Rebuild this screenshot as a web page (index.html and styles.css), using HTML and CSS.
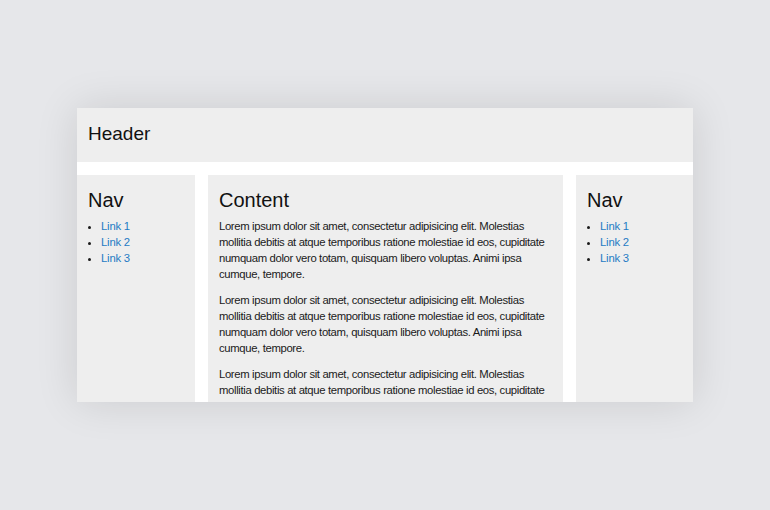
FILE: index.html
```html
<!DOCTYPE html>
<html>
<head>
<meta charset="utf-8">
<link rel="stylesheet" href="styles.css">
</head>
<body>
<div class="page">
  <header class="header">Header</header>
  <nav class="panel">
    <h2 class="title">Nav</h2>
    <ul class="links">
      <li><a href="#">Link 1</a></li>
      <li><a href="#">Link 2</a></li>
      <li><a href="#">Link 3</a></li>
    </ul>
  </nav>
  <main class="panel">
    <h2 class="title">Content</h2>
    <p class="text">Lorem ipsum dolor sit amet, consectetur adipisicing elit. Molestias mollitia debitis at atque temporibus ratione molestiae id eos, cupiditate numquam dolor vero totam, quisquam libero voluptas. Animi ipsa cumque, tempore.</p>
    <p class="text">Lorem ipsum dolor sit amet, consectetur adipisicing elit. Molestias mollitia debitis at atque temporibus ratione molestiae id eos, cupiditate numquam dolor vero totam, quisquam libero voluptas. Animi ipsa cumque, tempore.</p>
    <p class="text">Lorem ipsum dolor sit amet, consectetur adipisicing elit. Molestias mollitia debitis at atque temporibus ratione molestiae id eos, cupiditate numquam dolor vero totam, quisquam libero voluptas. Animi ipsa cumque, tempore.</p>
  </main>
  <aside class="panel">
    <h2 class="title">Nav</h2>
    <ul class="links">
      <li><a href="#">Link 1</a></li>
      <li><a href="#">Link 2</a></li>
      <li><a href="#">Link 3</a></li>
    </ul>
  </aside>
</div>
</body>
</html>
```
FILE: styles.css
```css
html, body {
  margin: 0;
  padding: 0;
}
body {
  background: #e6e7ea;
  height: 100vh;
  display: flex;
  align-items: center;
  justify-content: center;
  font-family: "Liberation Sans", Arial, sans-serif;
  color: #1a1a1a;
}
.page {
  width: 616px;
  height: 294px;
  background: #ffffff;
  display: grid;
  grid-template-columns: 118px 355px 117px;
  grid-template-rows: 54px 1fr;
  column-gap: 13px;
  row-gap: 13px;
  overflow: hidden;
  box-shadow: 0 0 40px rgba(0, 0, 0, 0.12);
}
.header {
  grid-column: 1 / -1;
  background: #eeeeee;
  padding: 16px 11px 0;
  font-size: 19px;
  line-height: 20px;
  color: #111;
}
.panel {
  background: #eeeeee;
  padding: 14px 11px 0;
  min-height: 0;
}
.title {
  margin: 0 0 7px;
  font-size: 20px;
  line-height: 22px;
  font-weight: normal;
  color: #111;
}
.links {
  margin: 0;
  padding-left: 13px;
  font-size: 11.3px;
  line-height: 16px;
  letter-spacing: -0.2px;
}
.links a {
  color: #1f7bc4;
  text-decoration: none;
}
.text {
  margin: 0 0 10px;
  font-size: 11.3px;
  line-height: 16px;
  letter-spacing: -0.35px;
}
```
